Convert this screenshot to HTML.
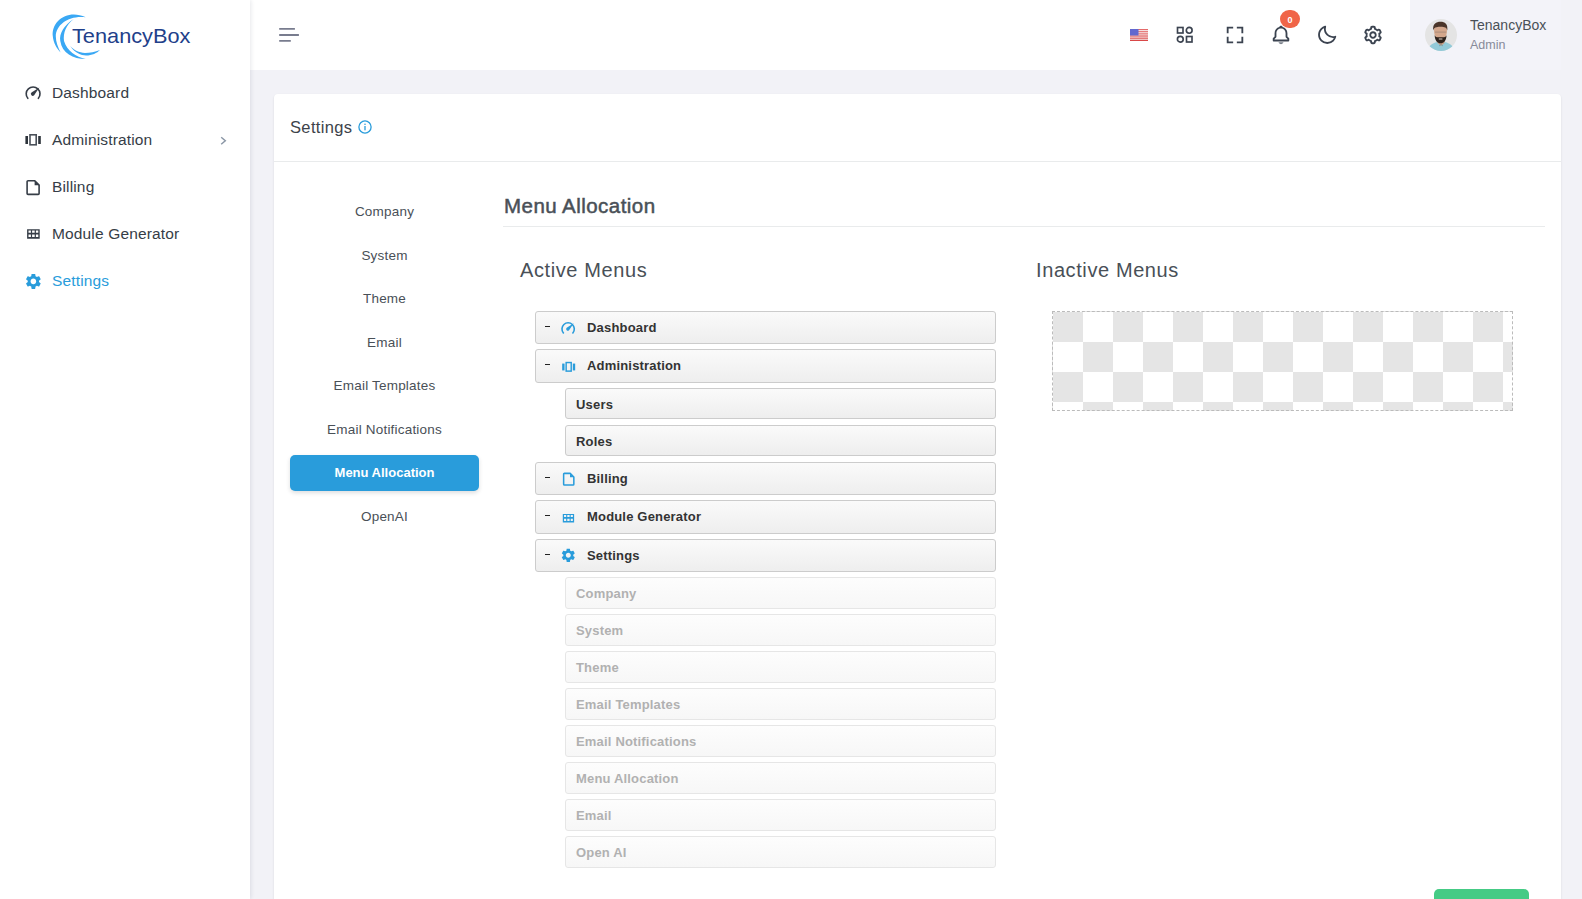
<!DOCTYPE html>
<html>
<head>
<meta charset="utf-8">
<style>
*{box-sizing:border-box;margin:0;padding:0}
html,body{width:1582px;height:899px;overflow:hidden}
body{background:#f2f2f7;font-family:"Liberation Sans",sans-serif;color:#212529;position:relative}
.abs{position:absolute}
#sidebar{position:absolute;left:0;top:0;width:250px;height:899px;background:#fff;box-shadow:1px 0 4px rgba(15,34,58,.10);z-index:2}
#header{position:absolute;left:250px;top:0;width:1311px;height:70px;background:#fff}
#profile{position:absolute;left:1410px;top:0;width:151px;height:70px;background:#f3f3f9}
#sidebar .tx{position:absolute;left:52px;font-size:15.5px;letter-spacing:.15px;color:#363d47;white-space:nowrap}
#card{position:absolute;left:274px;top:94px;width:1287px;height:900px;background:#fff;border-radius:4px;box-shadow:0 1px 2px rgba(56,65,74,.15)}
#cardhead{position:absolute;left:0;top:0;width:1287px;height:68px;border-bottom:1px solid #e9ebec}
.tab{position:absolute;left:16px;width:189px;height:36px;text-align:center;font-size:13.5px;letter-spacing:.2px;color:#495057;line-height:38px}
.tab.active{background:#299cdb;color:#fff;border-radius:5px;box-shadow:0 2px 4px rgba(30,32,37,.15);font-weight:bold;font-size:13px;letter-spacing:0;line-height:36px}
.h5{position:absolute;font-size:20px;color:#495057;white-space:nowrap}
.dd{position:absolute;border:1px solid #ccc;border-radius:3px;background:linear-gradient(#fafafa,#eee);font-weight:bold;font-size:13px;letter-spacing:.18px;color:#333;white-space:nowrap}
.dd .dash{position:absolute;left:8.6px;top:14px;width:5px;height:1.4px;background:#222}
.dd .t{position:absolute;left:51px;top:8px}
.dd.ch .t{left:10px;top:8px}
.dd.off{border-color:#e6e6e6;background:linear-gradient(#fdfdfd,#f7f7f7);color:#b1b1b1}
#empty{position:absolute;left:1052px;top:311px;width:461px;height:100px;border:1px dashed #bbb;background-color:#e5e5e5;
background-image:linear-gradient(45deg,#fff 25%,transparent 25%,transparent 75%,#fff 75%,#fff),linear-gradient(45deg,#fff 25%,transparent 25%,transparent 75%,#fff 75%,#fff);
background-size:60px 60px;background-position:0 0,30px 30px}
</style>
</head>
<body>
<div id="sidebar">
  <!-- logo -->
  <svg class="abs" style="left:48px;top:8px" width="60" height="54" viewBox="0 0 60 54" fill="#3aa8f4">
    <path d="M37.8 9.3C20 0.5 3 13 4.8 28.2C5.5 35 8.5 40 12.6 44.4C10 39 7.8 34 7.8 28.2C8 16 22 7 37.8 9.3Z"/>
    <path d="M25.8 11.1C16 17 11 26 12.3 33C14 45 25 51 37.8 51C28 49 19 43 16 33C15 25 18 17 25.8 11.1Z"/>
    <path d="M22.2 38.1C27 45 33 47.5 38 47.5C44 47.5 49 45 52 42C47 44 42 45 37 45C31 45 26 42 22.2 38.1Z"/>
  </svg>
  <div class="abs" style="left:72px;top:23.5px;font-size:21px;color:#22408a;white-space:nowrap;transform-origin:0 0;transform:scaleX(1.035)">TenancyBox</div>

  <svg class="abs" style="left:24px;top:85px" width="18" height="16" viewBox="0 0 18 16">
    <path d="M3.81 13.33A6.9 6.9 0 1 1 14.39 13.33" fill="none" stroke="#363d47" stroke-width="1.6" stroke-linecap="round"/>
    <path d="M7.48 7.53 L15.4 2.5 L10.12 10.27 A1.9 1.9 0 0 1 7.48 7.53Z" fill="#363d47"/>
  </svg>
  <div class="tx" style="top:84px">Dashboard</div>
  <svg class="abs" style="left:24px;top:133px" width="18" height="14" viewBox="0 0 18 14">
    <rect x="1.4" y="3" width="2.6" height="8" fill="#2d333b"/>
    <rect x="6" y="1.8" width="6.2" height="10" fill="none" stroke="#4a5059" stroke-width="1.6"/>
    <rect x="14.2" y="3" width="2.6" height="8" fill="#2d333b"/>
  </svg>
  <div class="tx" style="top:131px">Administration</div>
  <svg class="abs" style="left:217px;top:134px" width="10" height="12" viewBox="0 0 10 12"><path d="M4.2 3.2L8.3 6.7 4.2 10.2" fill="none" stroke="#8b97a6" stroke-width="1.5"/></svg>
  <svg class="abs" style="left:24px;top:178px" width="18" height="18" viewBox="0 0 18 18">
    <path d="M4 2.8h6.8l4.3 4.3v8.4a.9.9 0 0 1-.9.9H4a.9.9 0 0 1-.9-.9V3.7a.9.9 0 0 1 .9-.9z" fill="none" stroke="#363d47" stroke-width="1.6" stroke-linejoin="round"/>
    <path d="M10.6 2.8v4.5h4.5z" fill="#363d47"/>
  </svg>
  <div class="tx" style="top:178px">Billing</div>
  <svg class="abs" style="left:24px;top:226px" width="18" height="16" viewBox="0 0 18 16">
    <path fill="#363d47" fill-rule="evenodd" d="M3.1 3.2h12.6v9.6H3.1z M4.5 4.5h2.4v2.3h-2.4z M8.1 4.5h2.6v2.3h-2.6z M11.9 4.5h2.4v2.3h-2.4z M4.5 8.5h2.4v2.5h-2.4z M8.1 8.5h2.6v2.5h-2.6z M11.9 8.5h2.4v2.5h-2.4z"/>
  </svg>
  <div class="tx" style="top:225px">Module Generator</div>
  <svg class="abs" style="left:23.7px;top:271.9px" width="18.75" height="18.75" viewBox="0 0 24 24">
    <path id="gearp" fill="#299cdb" d="M19.14,12.94c0.04-0.3,0.06-0.61,0.06-0.94c0-0.32-0.02-0.64-0.07-0.94l2.03-1.58c0.18-0.14,0.23-0.41,0.12-0.61l-1.92-3.32c-0.12-0.22-0.37-0.29-0.59-0.22l-2.39,0.96c-0.5-0.38-1.03-0.7-1.62-0.94L14.4,2.81c-0.04-0.24-0.24-0.41-0.48-0.41h-3.84c-0.24,0-0.43,0.17-0.47,0.41L9.25,5.35C8.66,5.59,8.12,5.92,7.63,6.29L5.24,5.33c-0.22-0.08-0.47,0-0.59,0.22L2.74,8.87C2.62,9.08,2.66,9.34,2.86,9.48l2.03,1.58C4.84,11.360,4.8,11.69,4.8,12s0.02,0.64,0.07,0.94l-2.03,1.58c-0.18,0.14-0.23,0.41-0.12,0.61l1.92,3.32c0.12,0.22,0.37,0.29,0.59,0.22l2.39-0.96c0.5,0.38,1.03,0.7,1.62,0.94l0.36,2.54c0.05,0.24,0.24,0.41,0.48,0.41h3.840c0.24,0,0.44-0.17,0.47-0.41l0.36-2.54c0.59-0.24,1.13-0.56,1.62-0.94l2.39,0.96c0.22,0.08,0.47,0,0.59-0.22l1.92-3.32c0.12-0.22,0.07-0.47-0.12-0.61L19.14,12.94z M12,15.6c-1.98,0-3.6-1.62-3.6-3.6s1.62-3.6,3.6-3.6s3.6,1.62,3.6,3.6S13.98,15.6,12,15.6z"/>
  </svg>
  <div class="tx" style="top:272px;color:#299cdb">Settings</div>
</div>

<div id="header">
  <svg class="abs" style="left:29px;top:27px" width="22" height="16" viewBox="0 0 22 16"><path d="M0.2 1.9h15.7M0.2 8h19.7M0.2 13.9h11.6" stroke="#787c8e" stroke-width="1.8"/></svg>
</div>
<div id="profile">
  <svg class="abs" style="left:15px;top:19px" width="32" height="32" viewBox="0 0 32 32">
    <defs><clipPath id="av"><circle cx="16" cy="16" r="16"/></clipPath></defs>
    <g clip-path="url(#av)">
      <rect width="32" height="32" fill="#e4e4e4"/>
      <path d="M2 33 C3 27 7 24.5 12 23 L16 25 L20 23 C25 24.5 29 27 30 33 Z" fill="#93cad8"/>
      <path d="M12.5 20 L12.5 24 L16 27 L19.5 24 L19.5 20 Z" fill="#c89a80"/>
      <path d="M9 9.5 C9 15 9.5 20 15.5 22 C21.5 20 22 15 22 9.5 C20 6 11 6 9 9.5Z" fill="#d3a78c"/>
      <path d="M8.2 11.5 C7.5 5 11 2.8 15.5 2.8 C20 2.8 23 5 22.3 11.5 C21.5 8.5 20 7.8 15.5 7.8 C11 7.8 9.2 8.5 8.2 11.5Z" fill="#4a3428"/>
      <path d="M9.6 16.2 C10 22 12.5 24.2 15.6 24.2 C18.7 24.2 21.2 22 21.6 16.2 C20.5 18.5 19 18.2 15.6 18.2 C12.2 18.2 10.7 18.5 9.6 16.2Z" fill="#2d221c"/>
      <path d="M13.8 20 h3.6" stroke="#f0e6de" stroke-width=".9"/>
      <path d="M10 13.1 h11.2" stroke="#8d7a70" stroke-width=".6"/>
      <path d="M14 27 L16 25.5 L18 27" fill="none" stroke="#5a8fa0" stroke-width=".6"/>
    </g>
  </svg>
  <div class="abs" style="left:60px;top:17px;font-size:14px;color:#495057;white-space:nowrap">TenancyBox</div>
  <div class="abs" style="left:60px;top:38px;font-size:12.5px;color:#878a99;white-space:nowrap">Admin</div>
</div>
<!-- header icons -->
<svg class="abs" style="left:1130px;top:29px" width="18" height="12" viewBox="0 0 18 12">
  <rect width="18" height="12" fill="#f6eeee"/>
  <rect y="0" width="18" height="1" fill="#e46a6a"/><rect y="1.9" width="18" height="0.95" fill="#e46a6a"/><rect y="3.75" width="18" height="0.95" fill="#e46a6a"/><rect y="5.6" width="18" height="0.95" fill="#e25858"/><rect y="7.45" width="18" height="0.95" fill="#e04f4f"/><rect y="9.3" width="18" height="0.95" fill="#dc4a4a"/><rect y="11" width="18" height="1" fill="#d94848"/>
  <rect width="8.5" height="6.5" fill="#6368cf"/>
</svg>
<svg class="abs" style="left:1176px;top:26px" width="18" height="18" viewBox="0 0 18 18" fill="none" stroke="#3b4350" stroke-width="1.65">
  <rect x="1.5" y="1.5" width="5.5" height="5.5"/><circle cx="13.2" cy="4.3" r="2.9"/><circle cx="4.3" cy="13.2" r="2.9"/><rect x="10.5" y="10.5" width="5.5" height="5.5"/>
</svg>
<svg class="abs" style="left:1224px;top:24px" width="22" height="22" viewBox="0 0 24 24" fill="#3b4350"><path d="M5 5h5V3H3v7h2zm5 14H5v-5H3v7h7zm11-5h-2v5h-5v2h7zm-2-4h2V3h-7v2h5z"/></svg>
<svg class="abs" style="left:1270px;top:24px" width="22" height="22" viewBox="0 0 24 24" fill="#3b4350"><path d="M19 13.586V10c0-3.217-2.185-5.927-5.145-6.742C13.562 2.520 12.846 2 12 2s-1.562.52-1.855 1.258C7.185 4.074 5 6.783 5 10v3.586l-1.707 1.707A.996.996 0 0 0 3 16v2a1 1 0 0 0 1 1h16a1 1 0 0 0 1-1v-2a.996.996 0 0 0-.293-.707L19 13.586zM19 17H5v-.586l1.707-1.707A.996.996 0 0 0 7 14v-4c0-2.757 2.243-5 5-5s5 2.243 5 5v4c0 .266.105.52.293.707L19 16.414V17z"/><path fill="#7a808a" d="M12 22a2.980 2.980 0 0 0 2.818-2H9.182A2.980 2.980 0 0 0 12 22z"/></svg>
<div class="abs" style="left:1280px;top:10px;width:20px;height:18px;border-radius:9px;background:#f06548;color:#fff;font-size:9px;font-weight:bold;text-align:center;line-height:21px">0</div>
<svg class="abs" style="left:1316px;top:24px" width="22" height="22" viewBox="0 0 24 24" fill="#3b4350"><path d="M20.742 13.045a8.088 8.088 0 0 1-2.077.271c-2.135 0-4.140-.83-5.646-2.336a8.025 8.025 0 0 1-2.064-7.723A1 1 0 0 0 9.730 2.034a10.014 10.014 0 0 0-4.489 2.582c-3.898 3.898-3.898 10.243 0 14.143a9.937 9.937 0 0 0 7.072 2.930 9.930 9.930 0 0 0 7.070-2.929 10.007 10.007 0 0 0 2.583-4.491 1.001 1.001 0 0 0-1.224-1.224zm-2.772 4.301a7.947 7.947 0 0 1-5.656 2.343 7.953 7.953 0 0 1-5.658-2.344c-3.118-3.119-3.118-8.195 0-11.314a7.923 7.923 0 0 1 2.060-1.483 10.027 10.027 0 0 0 2.890 7.848 9.972 9.972 0 0 0 7.848 2.891 8.036 8.036 0 0 1-1.484 2.059z"/></svg>
<svg class="abs" style="left:1362px;top:24px" width="22" height="22" viewBox="0 0 24 24" fill="#3b4350"><path d="M12 16c2.206 0 4-1.794 4-4s-1.794-4-4-4-4 1.794-4 4 1.794 4 4 4zm0-6c1.084 0 2 .916 2 2s-.916 2-2 2-2-.916-2-2 .916-2 2-2z"/><path d="m2.845 16.136 1 1.730c.531.917 1.809 1.261 2.730.730l.529-.306A8.100 8.100 0 0 0 9 19.402V20c0 1.103.897 2 2 2h2c1.103 0 2-.897 2-2v-.598a8.132 8.132 0 0 0 1.896-1.111l.529.306c.923.53 2.198.188 2.731-.731l.999-1.729a2.001 2.001 0 0 0-.731-2.732l-.505-.292a7.718 7.718 0 0 0 0-2.224l.505-.292a2.002 2.002 0 0 0 .731-2.732l-.999-1.729c-.531-.92-1.808-1.265-2.731-.732l-.529.306A8.100 8.100 0 0 0 15 4.598V4c0-1.103-.897-2-2-2h-2c-1.103 0-2 .897-2 2v.598a8.132 8.132 0 0 0-1.896 1.111l-.529-.306c-.924-.531-2.200-.187-2.731.732l-.999 1.729a2.001 2.001 0 0 0 .731 2.732l.505.292a7.683 7.683 0 0 0 0 2.223l-.505.292a2.003 2.003 0 0 0-.731 2.733zm3.326-2.758A5.703 5.703 0 0 1 6 12c0-.462.058-.926.170-1.378a.999.999 0 0 0-.470-1.108l-1.123-.65.998-1.729 1.145.662a.997.997 0 0 0 1.188-.142 6.071 6.071 0 0 1 2.384-1.399A1 1 0 0 0 11 5.300V4h2v1.300a1 1 0 0 0 .708.956 6.083 6.083 0 0 1 2.384 1.399.999.999 0 0 0 1.188.142l1.144-.661 1 1.729-1.124.649a1 1 0 0 0-.470 1.108c.112.452.170.916.170 1.378 0 .461-.058.925-.171 1.378a1 1 0 0 0 .471 1.108l1.123.649-.998 1.729-1.145-.661a.996.996 0 0 0-1.188.142 6.071 6.071 0 0 1-2.384 1.399A1 1 0 0 0 13 18.700l.002 1.300H11v-1.300a1 1 0 0 0-.708-.956 6.083 6.083 0 0 1-2.384-1.399.992.992 0 0 0-1.188-.141l-1.144.662-1-1.729 1.124-.651a1 1 0 0 0 .471-1.108z"/></svg>

<div id="card">
  <div id="cardhead">
    <div class="abs" style="left:16px;top:24px;font-size:16.5px;letter-spacing:.35px;color:#3d434a">Settings</div>
    <svg class="abs" style="left:84px;top:26px" width="14" height="14" viewBox="0 0 14 14"><circle cx="7" cy="7" r="6.1" fill="none" stroke="#299cdb" stroke-width="1.3"/><rect x="6.35" y="6" width="1.3" height="4.3" fill="#299cdb"/><circle cx="7" cy="4.2" r=".8" fill="#299cdb"/></svg>
  </div>
  <div class="tab" style="top:99px">Company</div>
  <div class="tab" style="top:143px">System</div>
  <div class="tab" style="top:186px">Theme</div>
  <div class="tab" style="top:230px">Email</div>
  <div class="tab" style="top:273px">Email Templates</div>
  <div class="tab" style="top:317px">Email Notifications</div>
  <div class="tab active" style="top:361px">Menu Allocation</div>
  <div class="tab" style="top:404px">OpenAI</div>
</div>

<div class="h5" style="left:504px;top:193.5px;font-size:20.5px;letter-spacing:.45px;-webkit-text-stroke:.5px #495057">Menu Allocation</div>
<div class="abs" style="left:503px;top:226px;width:1042px;height:1px;background:#e9ebec"></div>
<div class="h5" style="left:520px;top:259.3px;letter-spacing:.6px">Active Menus</div>
<div class="h5" style="left:1036px;top:259.3px;letter-spacing:.6px">Inactive Menus</div>

<div class="dd" style="left:535px;top:311px;width:461px;height:33px"><i class="dash"></i><svg class="abs" style="left:24.4px;top:9px" width="16.1" height="14.3" viewBox="0 0 18 16"><path d="M3.81 13.33A6.9 6.9 0 1 1 14.39 13.33" fill="none" stroke="#299cdb" stroke-width="1.8" stroke-linecap="round"/><path d="M7.48 7.53 L15.4 2.5 L10.12 10.27 A1.9 1.9 0 0 1 7.48 7.53Z" fill="#299cdb"/></svg><span class="t">Dashboard</span></div>
<div class="dd" style="left:535px;top:349px;width:461px;height:34px"><i class="dash"></i><svg class="abs" style="left:24.8px;top:10.8px" width="15.2" height="12" viewBox="0 0 18 14" preserveAspectRatio="none"><rect x="1.4" y="3" width="2.8" height="8" fill="#299cdb"/><rect x="6.1" y="1.8" width="6" height="10" fill="none" stroke="#299cdb" stroke-width="1.7"/><rect x="14" y="3" width="2.8" height="8" fill="#299cdb"/></svg><span class="t">Administration</span></div>
<div class="dd ch" style="left:565px;top:388px;width:431px;height:31px"><span class="t">Users</span></div>
<div class="dd ch" style="left:565px;top:425px;width:431px;height:31px"><span class="t">Roles</span></div>
<div class="dd" style="left:535px;top:462px;width:461px;height:33px"><i class="dash"></i><svg class="abs" style="left:25.2px;top:7.7px" width="15.3" height="15.3" viewBox="0 0 18 18"><path d="M4 2.8h6.8l4.3 4.3v8.4a.9.9 0 0 1-.9.9H4a.9.9 0 0 1-.9-.9V3.7a.9.9 0 0 1 .9-.9z" fill="none" stroke="#299cdb" stroke-width="1.8" stroke-linejoin="round"/><path d="M10.6 2.8v4.5h4.5z" fill="#299cdb"/></svg><span class="t">Billing</span></div>
<div class="dd" style="left:535px;top:500px;width:461px;height:34px"><i class="dash"></i><svg class="abs" style="left:24.3px;top:9.8px" width="16.2" height="14.4" viewBox="0 0 18 16"><path fill="#299cdb" fill-rule="evenodd" d="M3.1 3.2h12.6v9.6H3.1z M4.5 4.5h2.4v2.3h-2.4z M8.1 4.5h2.6v2.3h-2.6z M11.9 4.5h2.4v2.3h-2.4z M4.5 8.5h2.4v2.5h-2.4z M8.1 8.5h2.6v2.5h-2.6z M11.9 8.5h2.4v2.5h-2.4z"/></svg><span class="t">Module Generator</span></div>
<div class="dd" style="left:535px;top:539px;width:461px;height:33px"><i class="dash"></i><svg class="abs" style="left:24.2px;top:7.3px" width="16.6" height="16.6" viewBox="0 0 24 24"><use href="#gearp" fill="#299cdb"/></svg><span class="t">Settings</span></div>
<div class="dd ch off" style="left:565px;top:577px;width:431px;height:32px"><span class="t">Company</span></div>
<div class="dd ch off" style="left:565px;top:614px;width:431px;height:32px"><span class="t">System</span></div>
<div class="dd ch off" style="left:565px;top:651px;width:431px;height:32px"><span class="t">Theme</span></div>
<div class="dd ch off" style="left:565px;top:688px;width:431px;height:32px"><span class="t">Email Templates</span></div>
<div class="dd ch off" style="left:565px;top:725px;width:431px;height:32px"><span class="t">Email Notifications</span></div>
<div class="dd ch off" style="left:565px;top:762px;width:431px;height:32px"><span class="t">Menu Allocation</span></div>
<div class="dd ch off" style="left:565px;top:799px;width:431px;height:32px"><span class="t">Email</span></div>
<div class="dd ch off" style="left:565px;top:836px;width:431px;height:32px"><span class="t">Open AI</span></div>

<div id="empty"></div>

<div class="abs" style="left:1434px;top:889px;width:95px;height:40px;background:#45cb85;border-radius:5px"></div>
</body>
</html>
